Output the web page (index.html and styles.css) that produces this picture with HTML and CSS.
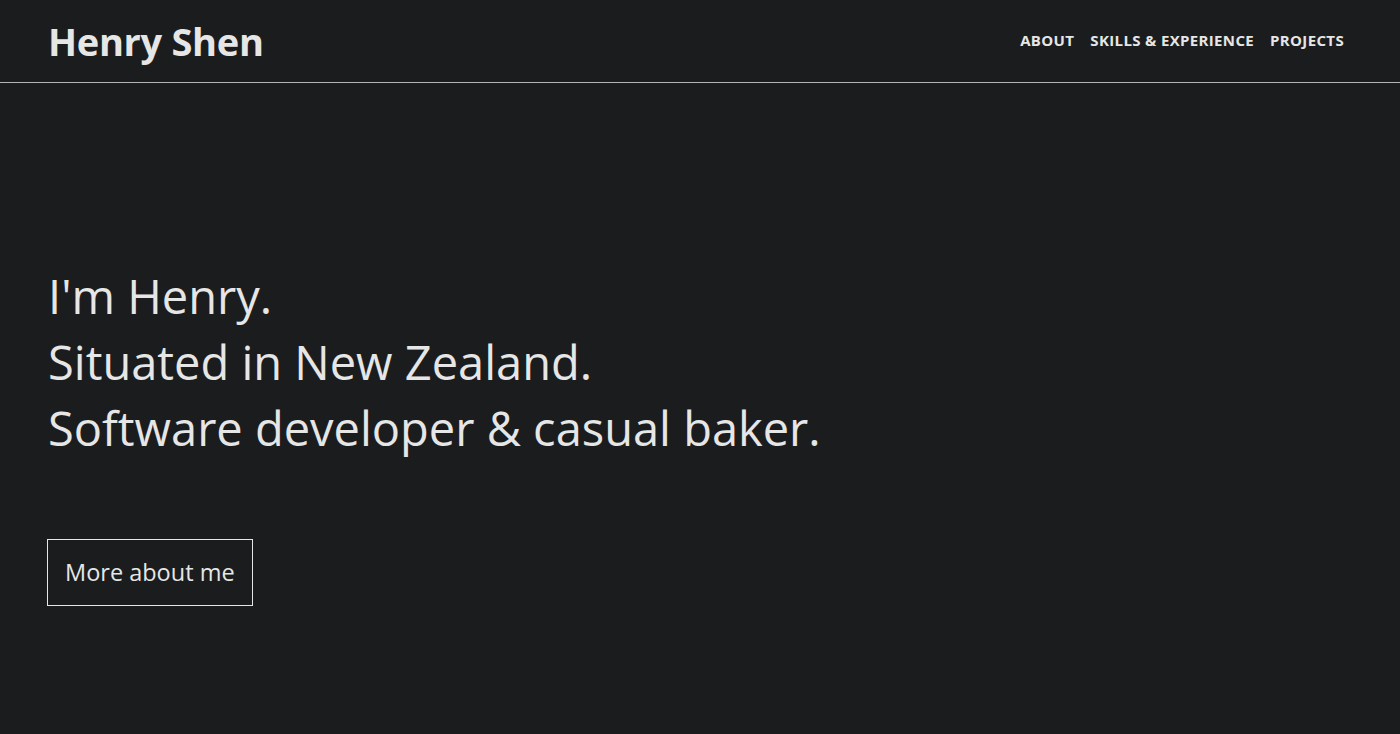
FILE: index.html
```html
<!DOCTYPE html>
<html lang="en">
<head>
<meta charset="utf-8">
<title>Henry Shen</title>
<link rel="stylesheet" href="styles.css">
</head>
<body>
<header class="site-header">
  <a class="brand" href="#">Henry Shen</a>
  <nav class="nav">
    <a class="nav-link" href="#about">About</a>
    <a class="nav-link" href="#skills">Skills &amp; Experience</a>
    <a class="nav-link" href="#projects">Projects</a>
  </nav>
</header>
<main class="hero">
  <h1 class="hero-title">
    <span class="hero-line">I'm Henry.</span>
    <span class="hero-line">Situated in New Zealand.</span>
    <span class="hero-line">Software developer &amp; casual baker.</span>
  </h1>
  <a class="hero-button" href="#about">More about me</a>
</main>
</body>
</html>
```
FILE: styles.css
```css
* { box-sizing: border-box; }
html, body {
  margin: 0;
  padding: 0;
  background: #1b1c1e;
  color: #e6e6e6;
  font-family: "Open Sans", "Noto Sans", sans-serif;
}
a { color: inherit; text-decoration: none; }

.site-header {
  height: 83px;
  display: flex;
  align-items: center;
  justify-content: space-between;
  padding: 0 48px;
  border-bottom: 1px solid #b5b5b5;
}
.brand {
  font-size: 38px;
  font-weight: 700;
  letter-spacing: -0.3px;
  margin-top: -1px;
}
.nav {
  display: flex;
  margin-top: -2px;
}
.nav-link {
  padding: 0 8px;
  font-size: 15px;
  font-weight: 700;
  text-transform: uppercase;
  letter-spacing: 0.35px;
}

.hero {
  padding: 180px 48px 0;
  display: flex;
  flex-direction: column;
  align-items: flex-start;
}
.hero-title {
  margin: 0;
  font-size: 47px;
  font-weight: 400;
  line-height: 66px;
}
.hero-line { display: block; }
.hero-button {
  margin-top: 78px;
  margin-left: -1px;
  border: 1px solid #e6e6e6;
  padding: 16px 17px;
  font-size: 23.5px;
  line-height: 33px;
}
```
